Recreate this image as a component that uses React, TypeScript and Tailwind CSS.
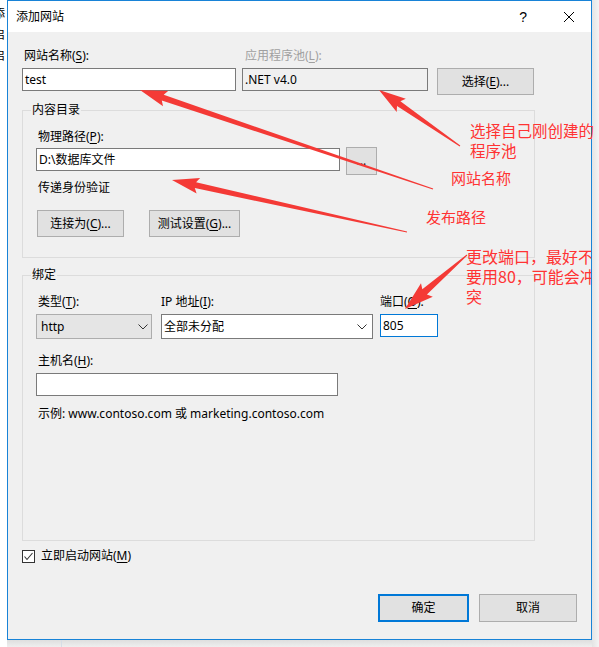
import React from "react";

function U({ children }: { children: React.ReactNode }) {
  return <span className="underline underline-offset-[2px] decoration-[1px]">{children}</span>;
}

function arrowPts(
  tx: number,
  ty: number,
  hx: number,
  hy: number,
  headLen = 24,
  headW = 8,
  shaftW = 3,
  tailW = 0.5
) {
  const dx = hx - tx;
  const dy = hy - ty;
  const L = Math.hypot(dx, dy);
  const ux = dx / L;
  const uy = dy / L;
  const nx = -uy;
  const ny = ux;
  const bx = hx - ux * headLen;
  const by = hy - uy * headLen;
  const pts: [number, number][] = [
    [tx + nx * tailW, ty + ny * tailW],
    [bx + nx * shaftW, by + ny * shaftW],
    [bx - ux * 3 + nx * headW, by - uy * 3 + ny * headW],
    [hx, hy],
    [bx - ux * 3 - nx * headW, by - uy * 3 - ny * headW],
    [bx - nx * shaftW, by - ny * shaftW],
    [tx - nx * tailW, ty - ny * tailW],
  ];
  return pts.map((p) => `${p[0].toFixed(1)},${p[1].toFixed(1)}`).join(" ");
}

function Chevron() {
  return (
    <svg width="10" height="6" viewBox="0 0 10 6">
      <path d="M0.5 0.5 L5 5 L9.5 0.5" fill="none" stroke="#333" strokeWidth="1" />
    </svg>
  );
}

export default function App() {
  const arrows = [
    { t: [433, 189], h: [140, 90] },
    { t: [460, 146], h: [379, 90] },
    { t: [407, 232], h: [172, 180] },
    { t: [467, 255], h: [405, 309], hl: 26, hw: 9, sw: 3.5 },
  ];
  return (
    <div className="relative w-[599px] h-[647px] overflow-hidden bg-white flex text-[12px] leading-[16px] text-black font-['Noto_Sans','Noto_Sans_CJK_SC',sans-serif]">
      {/* left strip: window behind */}
      <div className="w-[7px] h-full overflow-hidden bg-white flex flex-col pt-[6px] gap-[5px]">
        <div className="ml-[-7px] whitespace-nowrap">添</div>
        <div className="ml-[-7px] whitespace-nowrap">启</div>
        <div className="ml-[-7px] whitespace-nowrap">启</div>
      </div>

      {/* dialog column */}
      <div className="w-[585px] flex flex-col">
        <div className="w-[585px] h-[640px] border border-[#1883d7] bg-[#f0f0f0] flex flex-col">
          {/* title bar */}
          <div className="h-[31px] bg-white flex items-center pl-[8px] pr-[17px]">
            <span>添加网站</span>
            <span className="ml-auto text-[14px] leading-[16px] font-['Liberation_Sans',sans-serif]">?</span>
            <svg className="ml-[37px]" width="10" height="10" viewBox="0 0 10 10">
              <path d="M0 0 L10 10 M10 0 L0 10" stroke="#000" strokeWidth="1" />
            </svg>
          </div>

          {/* body */}
          <div className="flex flex-col">
            {/* top row */}
            <div className="flex mt-[16px] ml-[14px] items-start">
              <div className="flex flex-col w-[214px]">
                <div className="pl-[2px] h-[16px]">
                  网站名称(<U>S</U>):
                </div>
                <div className="mt-[4px] h-[23px] border border-[#7a7a7a] bg-white pl-[2px] flex items-center">
                  test
                </div>
              </div>
              <div className="flex flex-col w-[186px] ml-[6px]">
                <div className="pl-[3px] h-[16px] text-[#a0a0a0]">
                  应用程序池(<U>L</U>):
                </div>
                <div className="mt-[4px] h-[23px] border border-[#7a7a7a] bg-[#f0f0f0] pl-[2px] flex items-center">
                  .NET v4.0
                </div>
              </div>
              <div className="ml-[9px] mt-[20px] w-[97px] h-[27px] border border-[#adadad] bg-[#e1e1e1] flex items-center justify-center">
                选择(<U>E</U>)...
              </div>
            </div>

            {/* group 1 */}
            <div className="relative mt-[15px] ml-[14px] w-[513px] h-[148px] border border-[#dcdcdc] flex flex-col">
              <span className="absolute left-[8px] top-[-9px] px-[1px] bg-[#f0f0f0]">内容目录</span>
              <div className="mt-[18px] ml-[15px] h-[16px]">
                物理路径(<U>P</U>):
              </div>
              <div className="mt-[2px] flex items-start">
                <div className="ml-[13px] mt-[1px] w-[304px] h-[23px] border border-[#7a7a7a] bg-white pl-[2px] flex items-center">
                  D:\数据库文件
                </div>
                <div className="ml-[6px] w-[31px] h-[28px] border border-[#adadad] bg-[#e1e1e1] flex items-center justify-center">
                  ...
                </div>
              </div>
              <div className="mt-[5px] ml-[15px] h-[16px]">传递身份验证</div>
              <div className="mt-[14px] flex">
                <div className="ml-[14px] w-[87px] h-[27px] border border-[#adadad] bg-[#e1e1e1] flex items-center justify-center">
                  连接为(<U>C</U>)...
                </div>
                <div className="ml-[25px] w-[91px] h-[27px] border border-[#adadad] bg-[#e1e1e1] flex items-center justify-center">
                  测试设置(<U>G</U>)...
                </div>
              </div>
            </div>

            {/* group 2 */}
            <div className="relative mt-[17px] ml-[14px] w-[513px] h-[266px] border border-[#dcdcdc] flex flex-col">
              <span className="absolute left-[8px] top-[-9px] px-[1px] bg-[#f0f0f0]">绑定</span>
              <div className="mt-[18px] ml-[13px] flex items-start">
                <div className="flex flex-col w-[116px]">
                  <div className="pl-[2px] h-[16px]">
                    类型(<U>T</U>):
                  </div>
                  <div className="mt-[4px] h-[25px] border border-[#adadad] bg-[#e5e5e5] pl-[4px] pr-[3px] flex items-center">
                    <span>http</span>
                    <span className="ml-auto flex">
                      <Chevron />
                    </span>
                  </div>
                </div>
                <div className="flex flex-col w-[212px] ml-[9px]">
                  <div className="h-[16px]">
                    IP 地址(<U>I</U>):
                  </div>
                  <div className="mt-[4px] h-[25px] border border-[#7a7a7a] bg-white pl-[2px] pr-[5px] flex items-center">
                    <span>全部未分配</span>
                    <span className="ml-auto flex">
                      <Chevron />
                    </span>
                  </div>
                </div>
                <div className="flex flex-col w-[58px] ml-[7px]">
                  <div className="h-[16px] whitespace-nowrap">
                    端口(<U>O</U>):
                  </div>
                  <div className="mt-[4px] h-[23px] border border-[#0078d7] bg-white pl-[2px] flex items-center">
                    805
                  </div>
                </div>
              </div>
              <div className="mt-[14px] ml-[15px] h-[16px]">
                主机名(<U>H</U>):
              </div>
              <div className="mt-[4px] ml-[13px] w-[302px] h-[23px] border border-[#7a7a7a] bg-white" />
              <div className="mt-[10px] ml-[15px] h-[16px]">示例: www.contoso.com 或 marketing.contoso.com</div>
            </div>

            {/* checkbox */}
            <div className="mt-[7px] ml-[14px] h-[16px] flex items-center">
              <div className="w-[13px] h-[13px] border border-[#333] bg-white flex items-center justify-center">
                <svg width="11" height="11" viewBox="0 0 11 11">
                  <path d="M1.5 5.5 L4 8.5 L9.5 2" fill="none" stroke="#333" strokeWidth="1.1" />
                </svg>
              </div>
              <span className="ml-[6px]">
                立即启动网站(<U>M</U>)
              </span>
            </div>

            {/* bottom buttons */}
            <div className="mt-[30px] flex justify-end mr-[14px]">
              <div className="w-[91px] h-[28px] border-2 border-[#0078d7] bg-[#e1e1e1] flex items-center justify-center">
                确定
              </div>
              <div className="ml-[10px] w-[98px] h-[28px] border border-[#adadad] bg-[#e1e1e1] flex items-center justify-center">
                取消
              </div>
            </div>
          </div>
        </div>
        {/* shadow below */}
        <div className="h-[7px] bg-gradient-to-b from-[#dedede] to-[#efefef] flex">
          <div className="ml-[54px] w-[1px] h-full bg-[#d6dde6]" />
        </div>
      </div>

      {/* right strip */}
      <div className="w-[7px] h-full bg-gradient-to-r from-[#e4e4e4] to-[#f4f4f4]" />

      {/* arrows overlay */}
      <svg className="absolute left-0 top-0 pointer-events-none" width="599" height="647" viewBox="0 0 599 647">
        {arrows.map((a, i) => (
          <polygon
            key={i}
            points={arrowPts(a.t[0], a.t[1], a.h[0], a.h[1], a.hl ?? 24, a.hw ?? 8, a.sw ?? 3)}
            fill="#f43a36"
          />
        ))}
      </svg>

      {/* annotations */}
      <div className="absolute left-[470px] top-[120px] text-[15.5px] leading-[20px] text-[#ff3333] font-['Noto_Sans_CJK_SC',sans-serif] whitespace-nowrap">
        <div>选择自己刚创建的</div>
        <div>程序池</div>
      </div>
      <div className="absolute left-[451px] top-[168px] text-[15px] leading-[20px] text-[#ff3333] font-['Noto_Sans_CJK_SC',sans-serif] whitespace-nowrap">
        网站名称
      </div>
      <div className="absolute left-[426px] top-[207px] text-[15px] leading-[20px] text-[#ff3333] font-['Noto_Sans_CJK_SC',sans-serif] whitespace-nowrap">
        发布路径
      </div>
      <div className="absolute left-[466px] top-[246px] w-[125px] overflow-hidden text-[16px] leading-[20px] text-[#ff3333] font-['Noto_Sans_CJK_SC',sans-serif] whitespace-nowrap">
        <div>更改端口，最好不</div>
        <div>要用80，可能会冲</div>
        <div>突</div>
      </div>
    </div>
  );
}
